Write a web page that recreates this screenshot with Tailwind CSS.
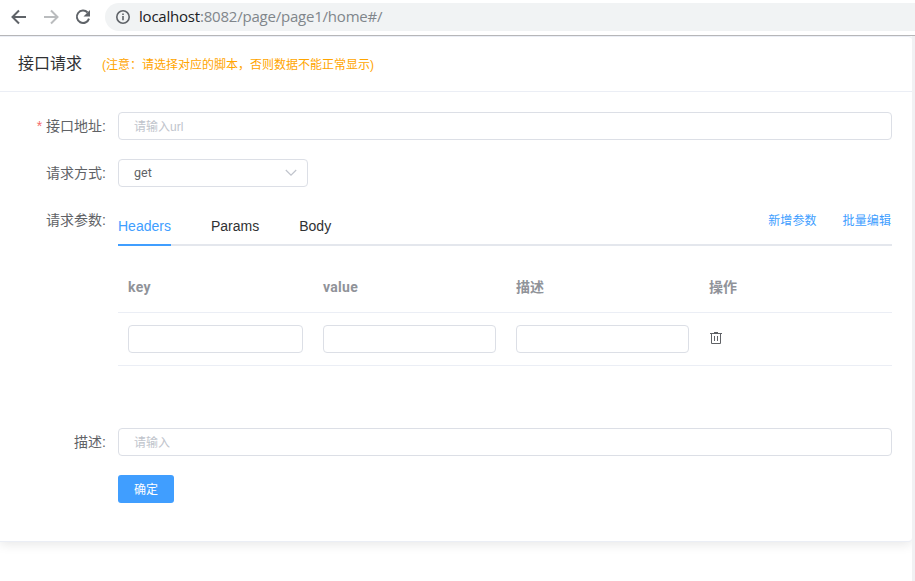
<!DOCTYPE html>
<html lang="zh">
<head>
<meta charset="utf-8">
<title>接口请求</title>
<script src="https://cdn.jsdelivr.net/npm/@tailwindcss/browser@4"></script>
</head>
<body class="w-[915px] h-[581px] overflow-hidden bg-white flex flex-col text-sm text-[#606266] font-['Liberation_Sans','Noto_Sans_CJK_SC',sans-serif]">
<header class="h-9 shrink-0 border-b border-[#b6b6b8] flex items-start relative z-10 bg-white">
  <div class="flex items-center h-[34px] w-[105px] pl-[9px] gap-3">
    <svg class="size-5" viewBox="0 0 20 20" fill="none" stroke="#5f6368" stroke-width="2"><path d="M17 10H4M10 3.5L3.5 10l6.5 6.5"/></svg>
    <svg class="size-5" viewBox="0 0 20 20" fill="none" stroke="#babcbe" stroke-width="2"><path d="M3 10h13M10 3.5l6.5 6.5-6.5 6.5"/></svg>
    <svg class="size-5" viewBox="0 0 20 20"><path d="M14.6 5.5A6.2 6.2 0 1 0 16 11.6" fill="none" stroke="#5f6368" stroke-width="2"/><path d="M17 3v6.5h-6.5z" fill="#5f6368"/></svg>
  </div>
  <div class="mt-[3px] h-7 flex-1 rounded-l-full bg-[#f1f3f4] flex items-center pl-[10px] gap-2">
    <svg class="size-4" viewBox="0 0 16 16" fill="none" stroke="#5f6368" stroke-width="1.6"><circle cx="8" cy="8" r="6.2"/><path d="M8 7v4.3M8 4.4v1.6"/></svg>
    <div class="text-[15px] leading-[26px] pb-0.5 tracking-[-0.21px] whitespace-nowrap text-[#80868b] font-['Open_Sans',sans-serif]"><span class="text-[#202124]">localhost</span>:8082/page/page1/home#/</div>
  </div>
</header>
<div class="flex-1 flex bg-white min-h-0">
  <main class="w-[912px] h-[506px] shrink-0 bg-white border-y border-[#ebeef5] rounded-r shadow-[0_2px_12px_rgba(0,0,0,0.1)]">
    <div class="h-[55px] border-b border-[#ebeef5] flex items-center pl-[18px] gap-5">
      <h1 class="text-base text-[#303133]">接口请求</h1>
      <span class="text-xs text-[#ffa500] pt-0.5">(注意：请选择对应的脚本，否则数据不能正常显示)</span>
    </div>
    <form class="pt-5 pr-5 flex flex-col">
      <div class="flex h-7 mb-[19px]">
        <label class="w-[118px] pr-3 text-right leading-7"><span class="text-[#f56c6c] mr-1">*</span>接口地址:</label>
        <div class="flex-1 border border-[#dcdfe6] rounded px-[15px] text-xs leading-[29px] text-[#c0c4cc]">请输入url</div>
      </div>
      <div class="flex h-7 mb-[19px]">
        <label class="w-[118px] pr-3 text-right leading-7">请求方式:</label>
        <div class="w-[190px] border border-[#dcdfe6] rounded pl-[15px] pr-[10px] flex items-center justify-between text-xs"><span class="font-['Roboto','Noto_Sans',sans-serif] text-[12.5px] pt-px">get</span>
          <svg class="w-3 h-2" viewBox="0 0 12 8" fill="none" stroke="#c0c4cc" stroke-width="1.2"><path d="M.8 1L6 6.2 11.2 1"/></svg>
        </div>
      </div>
      <div class="flex h-[222px]">
        <label class="w-[118px] pr-3 text-right leading-7">请求参数:</label>
        <div class="flex-1">
          <div class="flex h-10 justify-between border-b-2 border-[#e4e7ed]">
            <nav class="flex gap-10 text-[#303133] h-10 leading-10">
              <span class="h-10 w-[53px] border-b-2 border-[#409eff] text-[#409eff]">Headers</span><span>Params</span><span>Body</span>
            </nav>
            <div class="flex gap-[26px] pr-px text-xs leading-[30px] text-[#409eff]"><span class="tracking-[0.1px]">新增参数</span><span class="tracking-[0.1px]">批量编辑</span></div>
          </div>
          <div class="mt-[15px] grid grid-cols-[195px_193px_193px_193px] h-[52px] border-b border-[#ebeef5] items-center font-bold text-[#909399] font-['Roboto','Noto_Sans_CJK_SC',sans-serif]">
            <span class="pl-[10px] tracking-[0.3px]">key</span><span class="pl-[10px] tracking-[0.3px]">value</span><span class="pl-[10px]">描述</span><span class="pl-[10px]">操作</span>
          </div>
          <div class="grid grid-cols-[195px_193px_193px_193px] h-[53px] border-b border-[#ebeef5] items-center">
            <div class="mx-[10px] h-7 border border-[#dcdfe6] rounded"></div>
            <div class="mx-[10px] h-7 border border-[#dcdfe6] rounded"></div>
            <div class="mx-[10px] h-7 border border-[#dcdfe6] rounded"></div>
            <svg class="ml-[10px] size-[14px] -mt-0.5" viewBox="0 0 14 14" fill="none" stroke="#606266"><path d="M1 2.5h12M2.5 2.5v10h9v-10M5 1.5h4M5.5 5v5M8.5 5v5"/></svg>
          </div>
        </div>
      </div>
      <div class="flex h-7 mb-[19px]">
        <label class="w-[118px] pr-3 text-right leading-7">描述:</label>
        <div class="flex-1 border border-[#dcdfe6] rounded px-[15px] text-xs leading-[29px] text-[#c0c4cc]">请输入</div>
      </div>
      <button type="button" class="ml-[118px] w-14 h-7 pt-0.5 rounded-[3px] bg-[#409eff] text-white text-xs">确定</button>
    </form>
  </main>
  <div class="flex-1 bg-[#f1f1f3]"></div>
</div>
</body>
</html>
